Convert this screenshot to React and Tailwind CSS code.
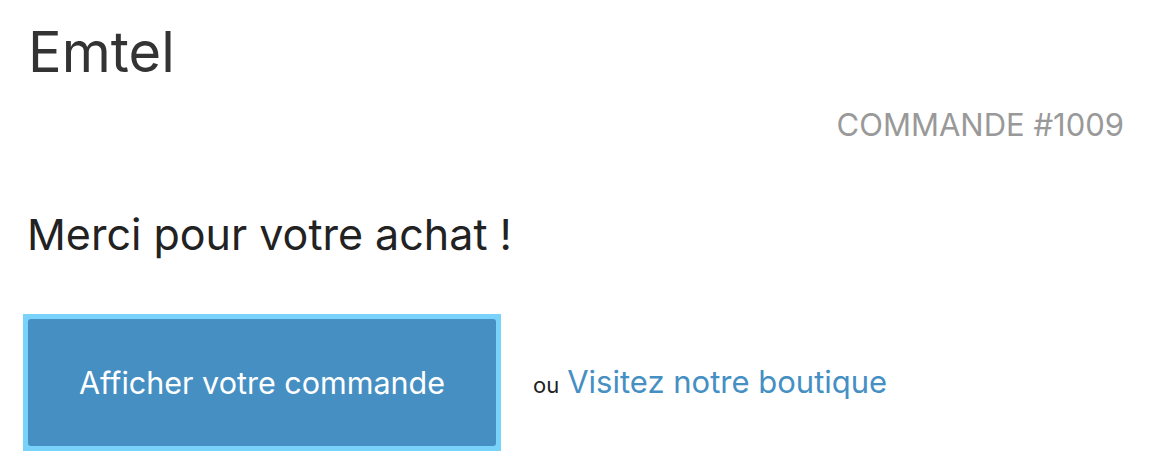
const App = () => {
  return (
    <div
      className="w-[1170px] h-[470px] bg-white overflow-hidden"
      style={{ fontFamily: "Inter, 'Liberation Sans', sans-serif" }}
    >
      <div className="pl-[23px] pr-[46px] pt-[18px]">
        {/* Shop name */}
        <h1 className="pl-[5px] text-[56px] leading-[68px] text-[#333333] font-normal">
          Emtel
        </h1>

        {/* Order number */}
        <div className="text-right text-[31px] leading-[38px] text-[#999999] uppercase mt-[20px]">
          Commande #1009
        </div>

        {/* Title */}
        <h2 className="pl-[4px] mt-[64px] text-[43px] leading-[52px] text-[#222222] font-normal">
          Merci pour votre achat !
        </h2>

        {/* Actions */}
        <div className="flex items-center mt-[54px]">
          <div className="bg-[#79d2f9] p-[5px]">
            <a
              href="#"
              className="flex items-center justify-center w-[468px] h-[127px] rounded-[3px] bg-[#458fc3] text-white text-[30.5px]"
            >
              Afficher votre commande
            </a>
          </div>
          <div className="ml-[32px] flex items-baseline gap-[8px]">
            <span className="text-[22px] text-[#222222]">ou</span>
            <a href="#" className="text-[31px] text-[#458fc3]">
              Visitez notre boutique
            </a>
          </div>
        </div>
      </div>
    </div>
  );
};

export default App;
